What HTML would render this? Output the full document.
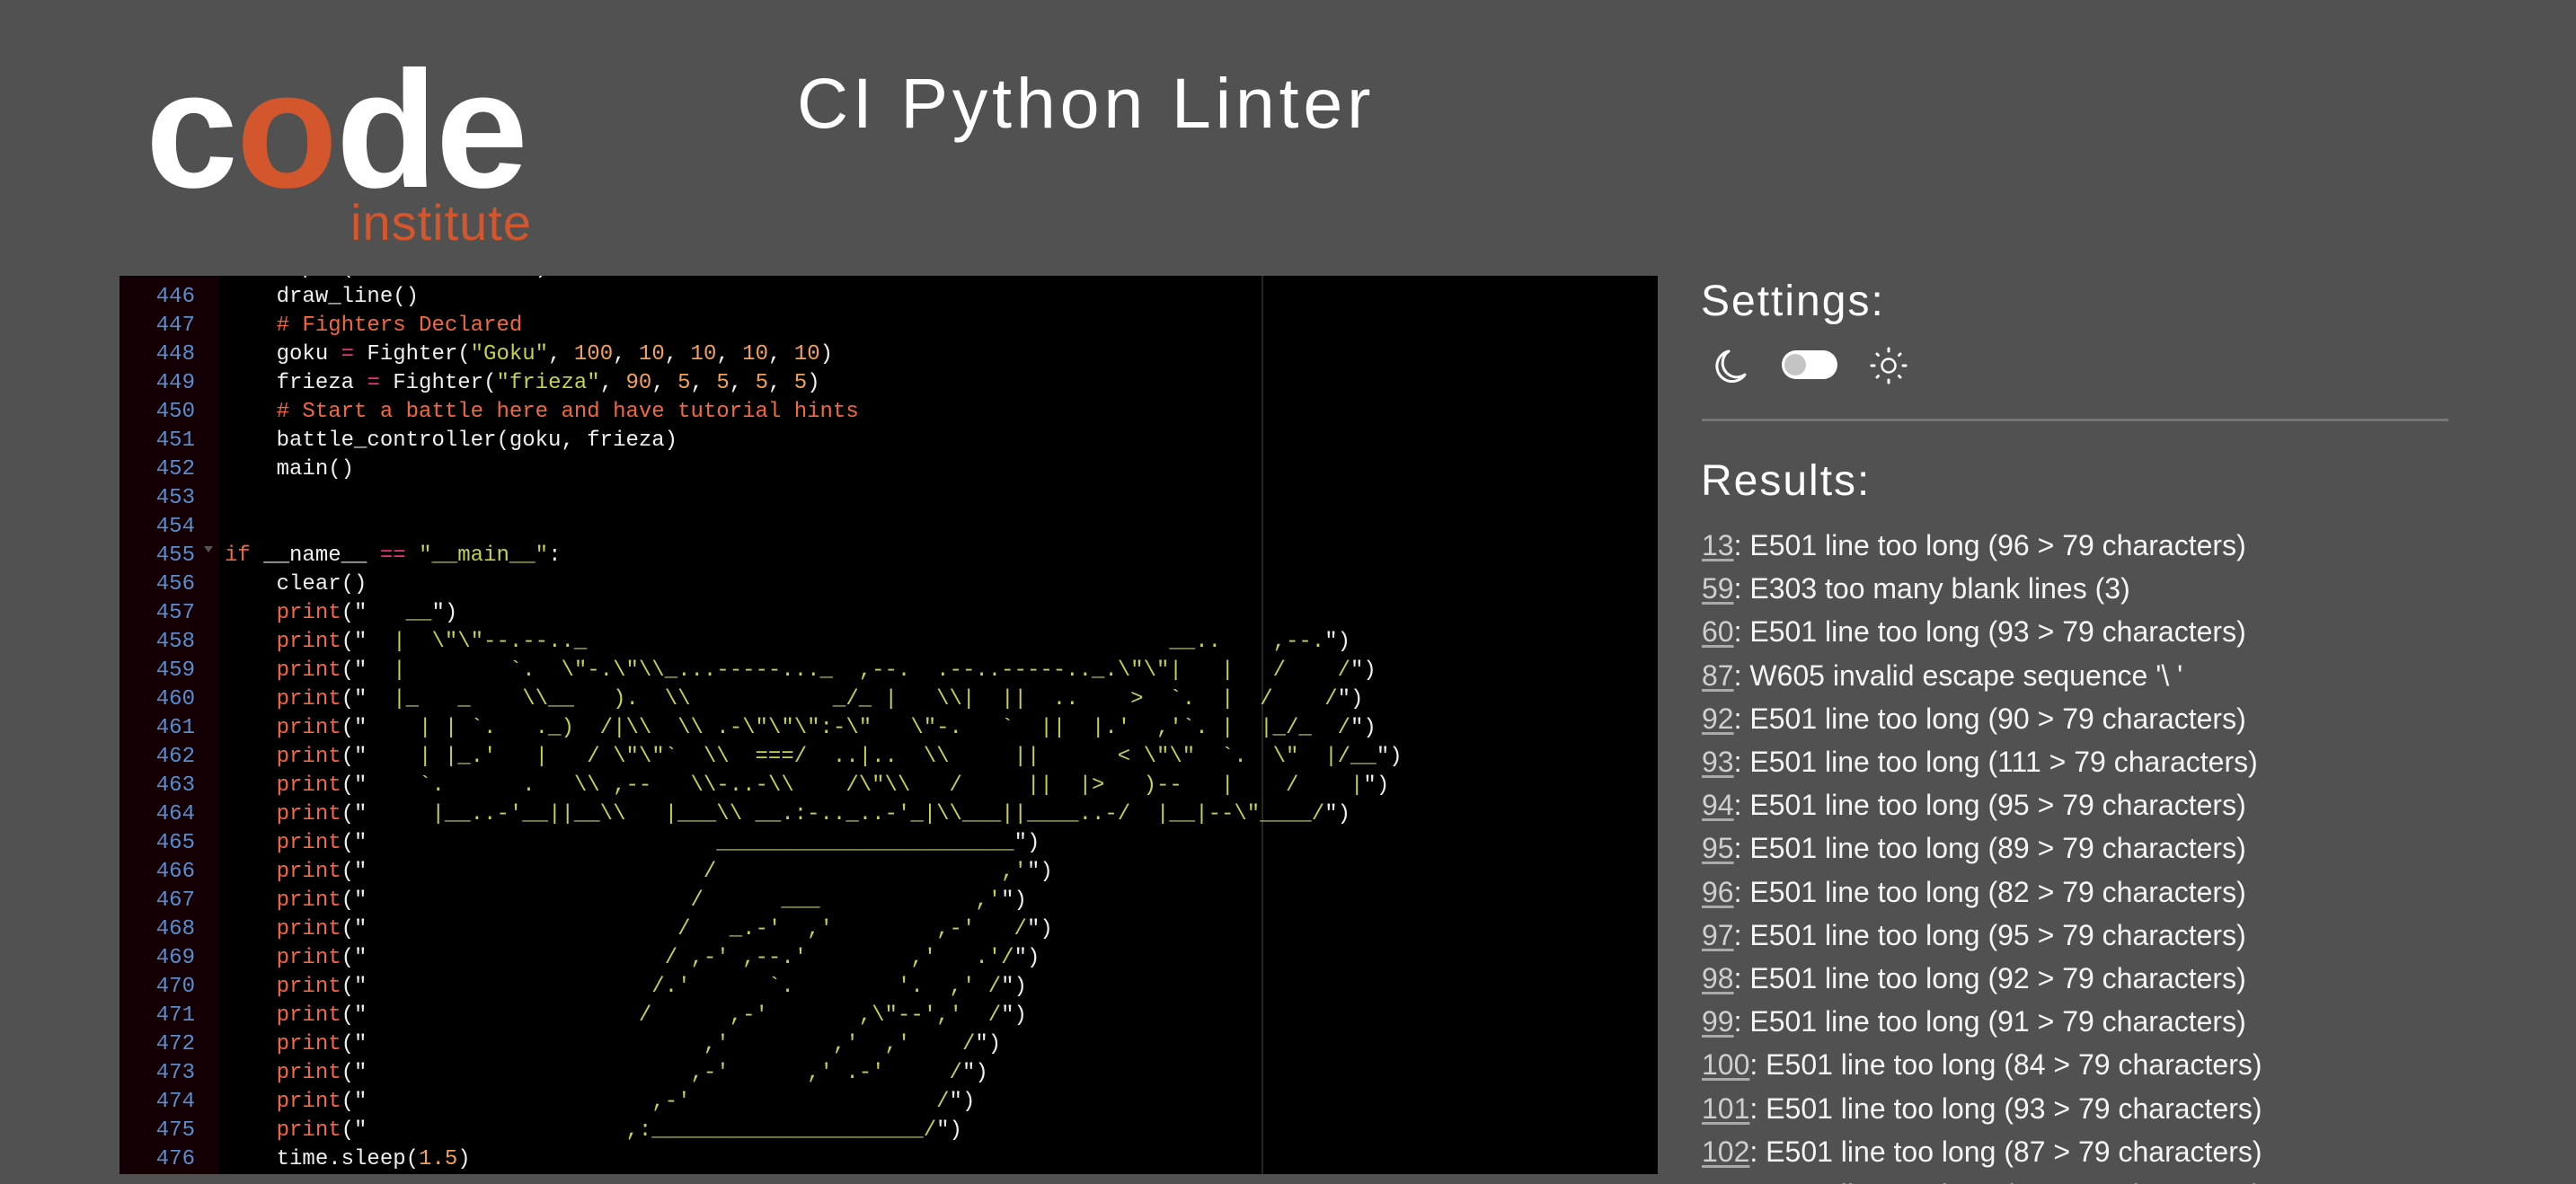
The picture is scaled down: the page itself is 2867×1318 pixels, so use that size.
<!DOCTYPE html>
<html><head><meta charset="utf-8">
<style>
html,body{margin:0;padding:0;width:2867px;height:1318px;overflow:hidden}
body{background:#515151;position:relative;font-family:"Liberation Sans",sans-serif}
.abs{position:absolute;white-space:pre;line-height:1}
.code{left:162px;top:53px;font-size:185px;font-weight:bold;color:#fff;letter-spacing:-2px}
.code .o{color:#d4562c}
.inst{left:390px;top:220px;font-size:56px;color:#d4562c;letter-spacing:1px}
.title{left:887px;top:75px;font-size:79px;color:#fff;letter-spacing:4.8px}
.h{font-size:48px;color:#fff;letter-spacing:2px;left:1893px}
.sep{position:absolute;left:1894px;top:466px;width:831px;height:3px;background:#777}
.res{position:absolute;left:1894px;top:583px;font-size:32px;line-height:48.2px;color:#f5f5f5;white-space:pre}
.res u{color:#cfcfcf;text-decoration-color:#aaa;text-underline-offset:4px}
.ed{position:absolute;left:133px;top:307px;width:1712px;height:1000px;background:#000;overflow:hidden}
.gut{position:absolute;left:0;top:0;width:111px;height:1000px;background:#140004}
.pm{position:absolute;left:1271px;top:0;width:2px;height:1000px;background:#262626}
.nums{position:absolute;left:0;top:-24px;width:84px;text-align:right;font-family:"Liberation Mono",monospace;font-size:24px;line-height:32px;color:#5b8dcd;white-space:pre}
.src{position:absolute;left:117px;top:-24px;font-family:"Liberation Mono",monospace;font-size:24px;line-height:32px;color:#f0f0f0;white-space:pre}
.r{color:#f4683f}.y{color:#c8d14a}.n{color:#f5a05a}.p{color:#f92a7c}
.fold{position:absolute;left:94px;top:301px;width:0;height:0;border-left:5px solid transparent;border-right:5px solid transparent;border-top:7px solid #555}
</style></head><body>
<div class="abs code">c<span class="o">o</span>de</div>
<div class="abs inst">institute</div>
<div class="abs title">CI Python Linter</div>

<div class="ed">
<div class="gut"></div>
<div class="pm"></div>
<div class="fold"></div>
<div class="nums">445
446
447
448
449
450
451
452
453
454
455
456
457
458
459
460
461
462
463
464
465
466
467
468
469
470
471
472
473
474
475
476</div>
<div class="src">    input(<span class="y">"...continue "</span>)
    draw_line()
    <span class="r"># Fighters Declared</span>
    goku <span class="p">=</span> Fighter(<span class="y">"Goku"</span>, <span class="n">100</span>, <span class="n">10</span>, <span class="n">10</span>, <span class="n">10</span>, <span class="n">10</span>)
    frieza <span class="p">=</span> Fighter(<span class="y">"frieza"</span>, <span class="n">90</span>, <span class="n">5</span>, <span class="n">5</span>, <span class="n">5</span>, <span class="n">5</span>)
    <span class="r"># Start a battle here and have tutorial hints</span>
    battle_controller(goku, frieza)
    main()


<span class="r">if</span> __name__ <span class="p">==</span> <span class="y">"__main__"</span>:
    clear()
    <span class="r">print</span>("<span class="y">   __</span>")
    <span class="r">print</span>("<span class="y">  |  \"\"--.--.._                                             __..    ,--.</span>")
    <span class="r">print</span>("<span class="y">  |        `.  \"-.\"\\_...-----..._  ,--.  .--..-----.._.\"\"|   |   /    /</span>")
    <span class="r">print</span>("<span class="y">  |_   _    \\__   ).  \\           _/_ |   \\|  ||  ..    &gt;  `.  |  /    /</span>")
    <span class="r">print</span>("<span class="y">    | | `.   ._)  /|\\  \\ .-\"\"\":-\"   \"-.   `  ||  |.'  ,'`. |  |_/_  /</span>")
    <span class="r">print</span>("<span class="y">    | |_.'   |   / \"\"`  \\  ===/  ..|..  \\     ||      &lt; \"\"  `.  \"  |/__</span>")
    <span class="r">print</span>("<span class="y">    `.      .   \\ ,--   \\-..-\\    /\"\\   /     ||  |&gt;   )--   |    /    |</span>")
    <span class="r">print</span>("<span class="y">     |__..-'__||__\\   |___\\ __.:-.._..-'_|\\___||____..-/  |__|--\"____/</span>")
    <span class="r">print</span>("<span class="y">                           _______________________</span>")
    <span class="r">print</span>("<span class="y">                          /                      ,'</span>")
    <span class="r">print</span>("<span class="y">                         /      ___            ,'</span>")
    <span class="r">print</span>("<span class="y">                        /   _.-'  ,'        ,-'   /</span>")
    <span class="r">print</span>("<span class="y">                       / ,-' ,--.'        ,'   .'/</span>")
    <span class="r">print</span>("<span class="y">                      /.'      `.        '.  ,' /</span>")
    <span class="r">print</span>("<span class="y">                     /      ,-'       ,\"--','  /</span>")
    <span class="r">print</span>("<span class="y">                          ,'        ,'  ,'    /</span>")
    <span class="r">print</span>("<span class="y">                         ,-'      ,' .-'     /</span>")
    <span class="r">print</span>("<span class="y">                      ,-'                   /</span>")
    <span class="r">print</span>("<span class="y">                    ,:_____________________/</span>")
    time.sleep(<span class="n">1.5</span>)</div>
</div>

<div class="abs h" style="top:312px">Settings:</div>
<svg style="position:absolute;left:1900px;top:385px" width="240" height="48" viewBox="0 0 240 48">
  <path d="M24 6 A17 17 0 1 0 42 32 A14 14 0 0 1 24 6 Z" fill="none" stroke="#fff" stroke-width="3" stroke-linejoin="round"/>
  <rect x="83" y="5" width="62" height="32" rx="16" fill="#fff"/>
  <circle cx="98" cy="21" r="12" fill="#c4c4c4"/>
  <g stroke="#fff" stroke-width="3" stroke-linecap="round" fill="none">
    <circle cx="202" cy="22" r="7.5" stroke-width="2.5"/>
    <line x1="202" y1="3" x2="202" y2="6"/><line x1="202" y1="38" x2="202" y2="41"/>
    <line x1="183" y1="22" x2="186" y2="22"/><line x1="218" y1="22" x2="221" y2="22"/>
    <line x1="189" y1="9" x2="190.5" y2="10.5"/><line x1="213.5" y1="33.5" x2="215" y2="35"/>
    <line x1="215" y1="9" x2="213.5" y2="10.5"/><line x1="190.5" y1="33.5" x2="189" y2="35"/>
  </g>
</svg>
<div class="sep"></div>
<div class="abs h" style="top:512px">Results:</div>
<div class="res"><u>13</u>: E501 line too long (96 &gt; 79 characters)
<u>59</u>: E303 too many blank lines (3)
<u>60</u>: E501 line too long (93 &gt; 79 characters)
<u>87</u>: W605 invalid escape sequence '\ '
<u>92</u>: E501 line too long (90 &gt; 79 characters)
<u>93</u>: E501 line too long (111 &gt; 79 characters)
<u>94</u>: E501 line too long (95 &gt; 79 characters)
<u>95</u>: E501 line too long (89 &gt; 79 characters)
<u>96</u>: E501 line too long (82 &gt; 79 characters)
<u>97</u>: E501 line too long (95 &gt; 79 characters)
<u>98</u>: E501 line too long (92 &gt; 79 characters)
<u>99</u>: E501 line too long (91 &gt; 79 characters)
<u>100</u>: E501 line too long (84 &gt; 79 characters)
<u>101</u>: E501 line too long (93 &gt; 79 characters)
<u>102</u>: E501 line too long (87 &gt; 79 characters)
<u>103</u>: E501 line too long (88 &gt; 79 characters)</div>
</body></html>
